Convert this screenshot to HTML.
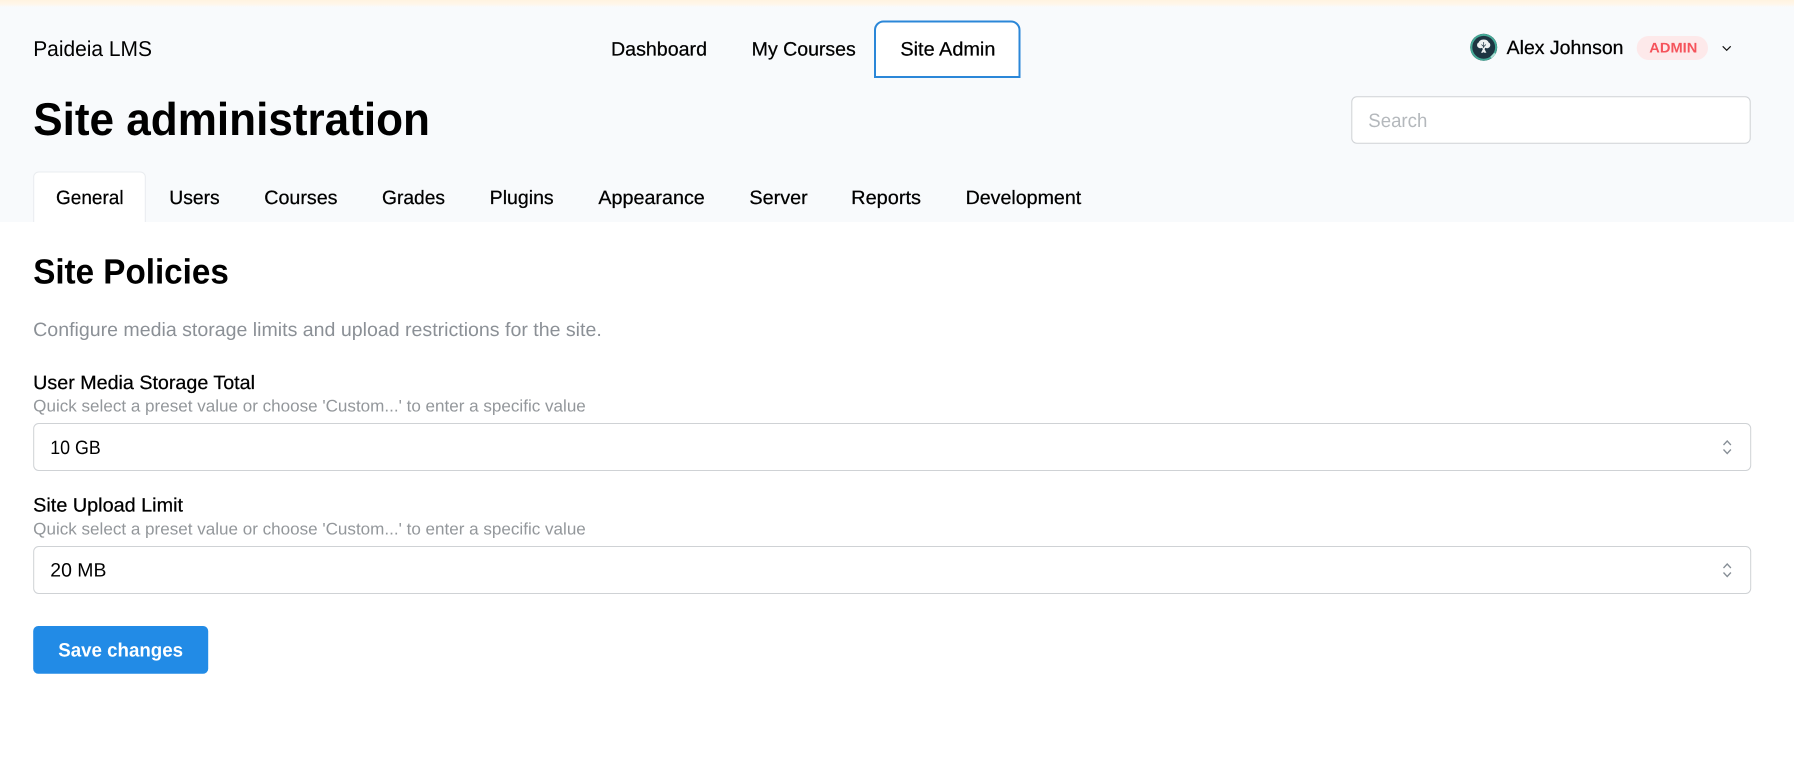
<!DOCTYPE html>
<html lang="en">
<head>
<meta charset="utf-8">
<title>Site Policies</title>
<style>
html,body{margin:0;padding:0;background:#fff;width:1794px;height:762px;overflow:hidden}
svg{display:block}
text{font-family:"Liberation Sans",Arial,sans-serif;font-size:19.3px;fill:#000;text-rendering:geometricPrecision}
.m{stroke:#000;stroke-width:.25px}
.g{fill:#8b9096}
.s{font-size:16.8px;fill:#93979b}
</style>
</head>
<body>
<svg width="1794" height="762" viewBox="0 0 1794 762" xmlns="http://www.w3.org/2000/svg">
<defs>
<linearGradient id="top" x1="0" y1="0" x2="0" y2="1"><stop offset="0" stop-color="#fff3e0"/><stop offset=".6" stop-color="#fff6ea"/><stop offset="1" stop-color="#f8fafc"/></linearGradient>
</defs>
<rect width="1794" height="762" fill="#fff"/>
<rect width="1794" height="222" fill="#f8fafc"/>
<rect width="1794" height="7" fill="url(#top)"/>

<text x="33.200" y="56" style="font-size:21.500px" textLength="118.800" lengthAdjust="spacingAndGlyphs">Paideia LMS</text>

<path d="M875 77V30a8.500 8.500 0 0 1 8.500-8.500H1011a8.500 8.500 0 0 1 8.500 8.500V77Z" fill="#fff" stroke="#2b87d8" stroke-width="2"/>
<text class="m" x="611" y="55.500" textLength="96" lengthAdjust="spacingAndGlyphs">Dashboard</text>
<text class="m" x="751.700" y="55.500" textLength="104.100" lengthAdjust="spacingAndGlyphs">My Courses</text>
<text class="m" x="900.400" y="55.500" textLength="95" lengthAdjust="spacingAndGlyphs">Site Admin</text>

<circle cx="1483.700" cy="47.300" r="13.500" fill="#1e3542"/>
<circle cx="1483.700" cy="47.300" r="12.400" fill="none" stroke="#45a896" stroke-width="2"/>
<path d="M1483.700 39.500c3 0 4.500 1.500 5 3 2 .5 2.500 4.500-.5 5.500-1 .5-2 .3-3-.2l-.6 1.500 1.800 3.500h-2.200l-.5-1-.5 1h-2.200l1.800-3.500-.6-1.500c-1 .5-2 .7-3 .2-3-1-2.500-5-.5-5.500 .5-1.500 2-3 5-3Z" fill="#eef2f2"/>
<path d="M1483.700 42v6M1481.500 44.500l2.200 2.200 2.200-2.200" fill="none" stroke="#1e3542" stroke-width=".7"/>
<path d="M1491 57.500l4-4" stroke="#a8e0d4" stroke-width="2" fill="none"/>
<text x="1506.700" y="54" textLength="116.800" lengthAdjust="spacingAndGlyphs" class="m">Alex Johnson</text>
<rect x="1636.700" y="36" width="71.300" height="24" rx="12" fill="#fde9ea"/>
<text x="1649.300" y="52.700" style="font-size:14px;font-weight:700;fill:#f5535b" textLength="48" lengthAdjust="spacingAndGlyphs">ADMIN</text>
<path d="M1722.700 46.300l4 4 4-4" fill="none" stroke="#111" stroke-width="1.200"/>

<rect x="1351.800" y="96.800" width="398.400" height="46.400" rx="5" fill="#fff" stroke="#cfd2d5"/>
<text x="1368.300" y="127" style="fill:#b4b8bc" textLength="59" lengthAdjust="spacingAndGlyphs">Search</text>

<text x="33.200" y="135" style="font-size:46px;font-weight:700" textLength="396.800" lengthAdjust="spacingAndGlyphs">Site administration</text>

<path d="M33.700 222V177a5 5 0 0 1 5-5H140.300a5 5 0 0 1 5 5V222" fill="#fff" stroke="#e9ecef"/>
<text class="m" x="56" y="204" textLength="67.600" lengthAdjust="spacingAndGlyphs">General</text>
<text class="m" x="169.300" y="204" textLength="50.400" lengthAdjust="spacingAndGlyphs">Users</text>
<text class="m" x="264.300" y="204" textLength="73.200" lengthAdjust="spacingAndGlyphs">Courses</text>
<text class="m" x="382" y="204" textLength="63" lengthAdjust="spacingAndGlyphs">Grades</text>
<text class="m" x="489.700" y="204" textLength="64" lengthAdjust="spacingAndGlyphs">Plugins</text>
<text class="m" x="598.400" y="204" textLength="106.400" lengthAdjust="spacingAndGlyphs">Appearance</text>
<text class="m" x="749.400" y="204" textLength="58.300" lengthAdjust="spacingAndGlyphs">Server</text>
<text class="m" x="851.200" y="204" textLength="69.800" lengthAdjust="spacingAndGlyphs">Reports</text>
<text class="m" x="965.600" y="204" textLength="115.600" lengthAdjust="spacingAndGlyphs">Development</text>

<text x="33.200" y="283.500" style="font-size:35px;font-weight:700" textLength="195.600" lengthAdjust="spacingAndGlyphs">Site Policies</text>
<text class="g" x="33.200" y="336" textLength="568.600" lengthAdjust="spacingAndGlyphs">Configure media storage limits and upload restrictions for the site.</text>

<text class="m" x="33.200" y="389" textLength="221.800" lengthAdjust="spacingAndGlyphs">User Media Storage Total</text>
<text class="s" x="33.200" y="411.500" textLength="552.600" lengthAdjust="spacingAndGlyphs">Quick select a preset value or choose 'Custom...' to enter a specific value</text>
<rect x="33.700" y="423.500" width="1717" height="47" rx="5" fill="#fff" stroke="#cfd2d5"/>
<text x="50.300" y="454" textLength="50.400" lengthAdjust="spacingAndGlyphs">10 GB</text>
<path d="M1723.500 445l3.700-4 3.700 4M1723.500 449.500l3.700 4 3.700-4" fill="none" stroke="#868e96" stroke-width="1.300"/>

<text class="m" x="33.200" y="511.500" textLength="149.800" lengthAdjust="spacingAndGlyphs">Site Upload Limit</text>
<text class="s" x="33.200" y="534.500" textLength="552.600" lengthAdjust="spacingAndGlyphs">Quick select a preset value or choose 'Custom...' to enter a specific value</text>
<rect x="33.700" y="546.500" width="1717" height="47" rx="5" fill="#fff" stroke="#cfd2d5"/>
<text x="50.300" y="576.700" textLength="56.100" lengthAdjust="spacingAndGlyphs">20 MB</text>
<path d="M1723.500 568l3.700-4 3.700 4M1723.500 572.500l3.700 4 3.700-4" fill="none" stroke="#868e96" stroke-width="1.300"/>

<rect x="33.200" y="626" width="175" height="47.700" rx="5" fill="#228be6"/>
<text x="58.300" y="656.500" style="font-weight:700;fill:#fff" textLength="124.700" lengthAdjust="spacingAndGlyphs">Save changes</text>
</svg>
</body>
</html>
